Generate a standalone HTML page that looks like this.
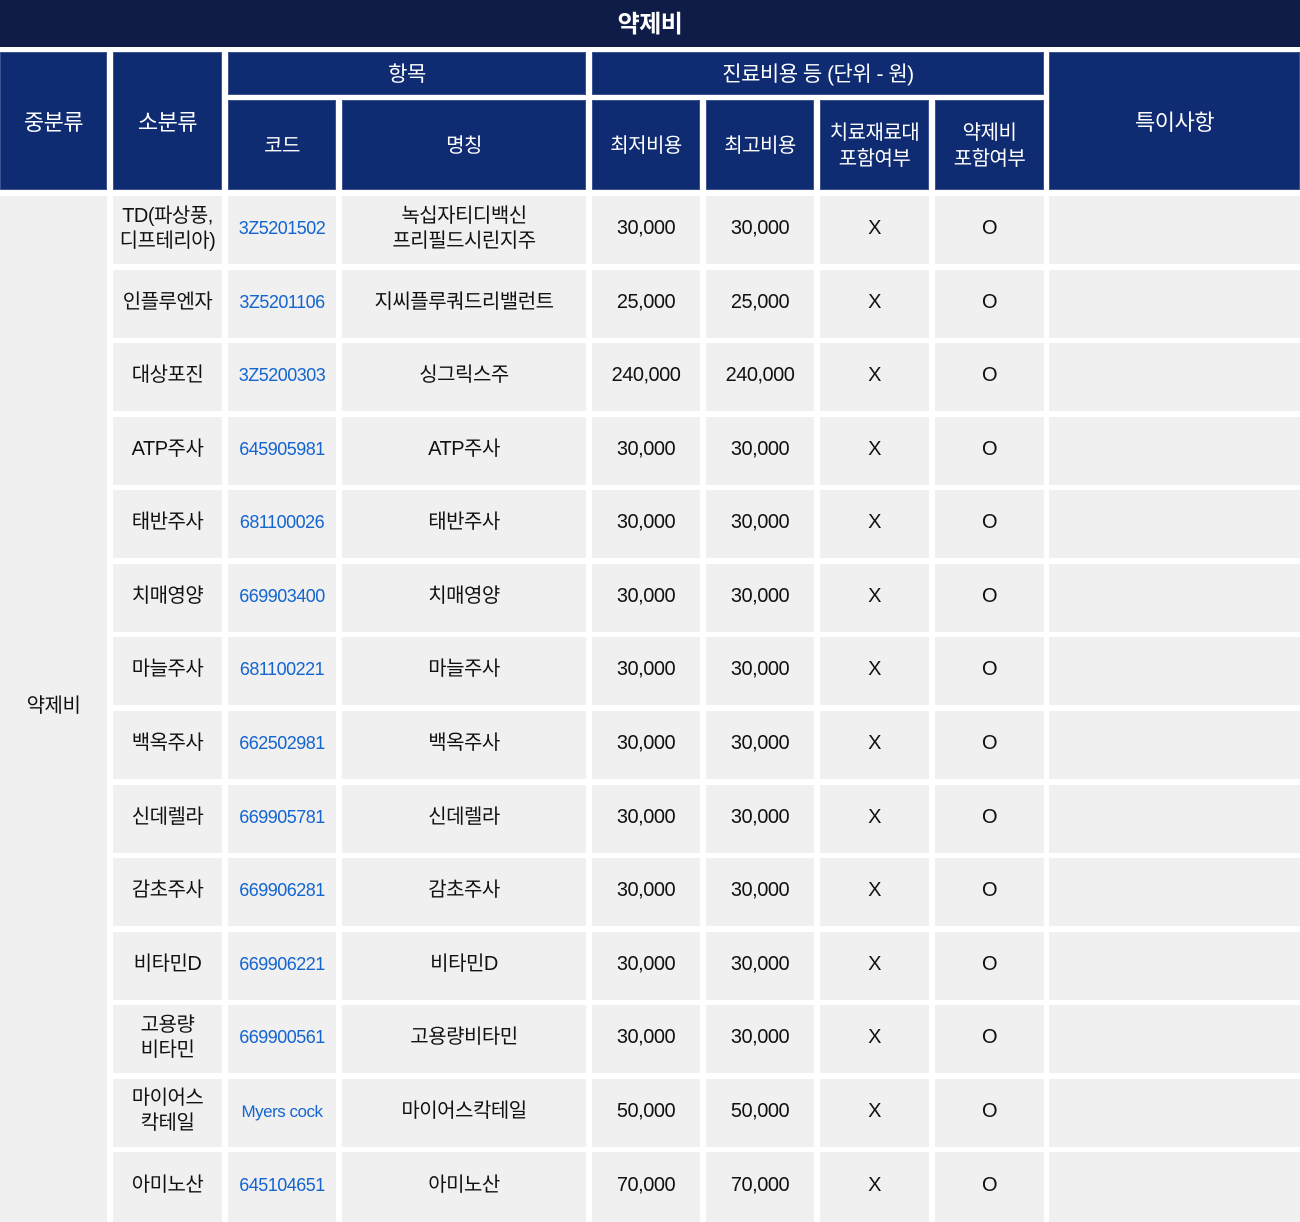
<!DOCTYPE html>
<html><head><meta charset="utf-8"><style>
*{margin:0;padding:0;box-sizing:border-box}
body{width:1300px;height:1222px;background:#fff;position:relative;overflow:hidden;font-family:"Liberation Sans","Noto Sans CJK KR",sans-serif;letter-spacing:-0.5px}
.c{position:absolute;display:flex;align-items:center;justify-content:center;text-align:center;padding-bottom:3px;line-height:25px}
.h{background:#0f2b72;color:#fff;border:1px solid #3d5490;font-size:20px}
.b{background:#f0f0f0;color:#111;font-size:20px;height:68px}
.k{color:#1565d0;font-size:18px}
.c1{left:113px;width:109px}.c2{left:228px;width:108px}.c3{left:342px;width:244px}.c4{left:592px;width:108px}.c5{left:706px;width:108px}.c6{left:820px;width:109px}.c7{left:935px;width:109px}.c8{left:1049px;width:251px}
</style></head><body>
<div class="c" style="left:0;top:0;width:1300px;height:47px;background:#101c48;color:#fff;font-size:24px;font-weight:bold;padding-bottom:0;padding-top:1px">약제비</div>
<div class="c h" style="left:0;top:52px;width:107px;height:138px;font-size:22px;padding-bottom:0;padding-top:2px">중분류</div>
<div class="c h c1" style="top:52px;height:138px;font-size:22px;padding-bottom:0;padding-top:2px">소분류</div>
<div class="c h" style="left:228px;top:52px;width:358px;height:43px;font-size:21px;padding-bottom:0;padding-top:1px">항목</div>
<div class="c h" style="left:592px;top:52px;width:452px;height:43px;font-size:21px;padding-bottom:0;padding-top:1px">진료비용 등 (단위 - 원)</div>
<div class="c h c8" style="top:52px;height:138px;font-size:22px;padding-bottom:0;padding-top:2px">특이사항</div>
<div class="c h c2" style="top:100px;height:90px;padding-bottom:0;padding-top:2px">코드</div>
<div class="c h c3" style="top:100px;height:90px;padding-bottom:0;padding-top:2px">명칭</div>
<div class="c h c4" style="top:100px;height:90px;padding-bottom:0;padding-top:2px">최저비용</div>
<div class="c h c5" style="top:100px;height:90px;padding-bottom:0;padding-top:2px">최고비용</div>
<div class="c h c6" style="top:100px;height:90px;padding-bottom:0;padding-top:2px;line-height:26px">치료재료대<br>포함여부</div>
<div class="c h c7" style="top:100px;height:90px;padding-bottom:0;padding-top:2px;line-height:26px">약제비<br>포함여부</div>
<div class="c b" style="left:0;top:196px;width:107px;height:1026px;padding-bottom:6px">약제비</div>

<div class="c b c1" style="top:196px">TD(파상풍,<br>디프테리아)</div><div class="c b c2 k" style="top:196px">3Z5201502</div><div class="c b c3" style="top:196px">녹십자티디백신<br>프리필드시린지주</div><div class="c b c4" style="top:196px">30,000</div><div class="c b c5" style="top:196px">30,000</div><div class="c b c6" style="top:196px">X</div><div class="c b c7" style="top:196px">O</div><div class="c b c8" style="top:196px"></div>

<div class="c b c1" style="top:269.5px">인플루엔자</div><div class="c b c2 k" style="top:269.5px">3Z5201106</div><div class="c b c3" style="top:269.5px">지씨플루쿼드리밸런트</div><div class="c b c4" style="top:269.5px">25,000</div><div class="c b c5" style="top:269.5px">25,000</div><div class="c b c6" style="top:269.5px">X</div><div class="c b c7" style="top:269.5px">O</div><div class="c b c8" style="top:269.5px"></div>

<div class="c b c1" style="top:343px">대상포진</div><div class="c b c2 k" style="top:343px">3Z5200303</div><div class="c b c3" style="top:343px">싱그릭스주</div><div class="c b c4" style="top:343px">240,000</div><div class="c b c5" style="top:343px">240,000</div><div class="c b c6" style="top:343px">X</div><div class="c b c7" style="top:343px">O</div><div class="c b c8" style="top:343px"></div>

<div class="c b c1" style="top:416.5px">ATP주사</div><div class="c b c2 k" style="top:416.5px">645905981</div><div class="c b c3" style="top:416.5px">ATP주사</div><div class="c b c4" style="top:416.5px">30,000</div><div class="c b c5" style="top:416.5px">30,000</div><div class="c b c6" style="top:416.5px">X</div><div class="c b c7" style="top:416.5px">O</div><div class="c b c8" style="top:416.5px"></div>

<div class="c b c1" style="top:490px">태반주사</div><div class="c b c2 k" style="top:490px">681100026</div><div class="c b c3" style="top:490px">태반주사</div><div class="c b c4" style="top:490px">30,000</div><div class="c b c5" style="top:490px">30,000</div><div class="c b c6" style="top:490px">X</div><div class="c b c7" style="top:490px">O</div><div class="c b c8" style="top:490px"></div>

<div class="c b c1" style="top:563.5px">치매영양</div><div class="c b c2 k" style="top:563.5px">669903400</div><div class="c b c3" style="top:563.5px">치매영양</div><div class="c b c4" style="top:563.5px">30,000</div><div class="c b c5" style="top:563.5px">30,000</div><div class="c b c6" style="top:563.5px">X</div><div class="c b c7" style="top:563.5px">O</div><div class="c b c8" style="top:563.5px"></div>

<div class="c b c1" style="top:637px">마늘주사</div><div class="c b c2 k" style="top:637px">681100221</div><div class="c b c3" style="top:637px">마늘주사</div><div class="c b c4" style="top:637px">30,000</div><div class="c b c5" style="top:637px">30,000</div><div class="c b c6" style="top:637px">X</div><div class="c b c7" style="top:637px">O</div><div class="c b c8" style="top:637px"></div>

<div class="c b c1" style="top:711px">백옥주사</div><div class="c b c2 k" style="top:711px">662502981</div><div class="c b c3" style="top:711px">백옥주사</div><div class="c b c4" style="top:711px">30,000</div><div class="c b c5" style="top:711px">30,000</div><div class="c b c6" style="top:711px">X</div><div class="c b c7" style="top:711px">O</div><div class="c b c8" style="top:711px"></div>

<div class="c b c1" style="top:784.5px">신데렐라</div><div class="c b c2 k" style="top:784.5px">669905781</div><div class="c b c3" style="top:784.5px">신데렐라</div><div class="c b c4" style="top:784.5px">30,000</div><div class="c b c5" style="top:784.5px">30,000</div><div class="c b c6" style="top:784.5px">X</div><div class="c b c7" style="top:784.5px">O</div><div class="c b c8" style="top:784.5px"></div>

<div class="c b c1" style="top:858px">감초주사</div><div class="c b c2 k" style="top:858px">669906281</div><div class="c b c3" style="top:858px">감초주사</div><div class="c b c4" style="top:858px">30,000</div><div class="c b c5" style="top:858px">30,000</div><div class="c b c6" style="top:858px">X</div><div class="c b c7" style="top:858px">O</div><div class="c b c8" style="top:858px"></div>

<div class="c b c1" style="top:931.5px">비타민D</div><div class="c b c2 k" style="top:931.5px">669906221</div><div class="c b c3" style="top:931.5px">비타민D</div><div class="c b c4" style="top:931.5px">30,000</div><div class="c b c5" style="top:931.5px">30,000</div><div class="c b c6" style="top:931.5px">X</div><div class="c b c7" style="top:931.5px">O</div><div class="c b c8" style="top:931.5px"></div>

<div class="c b c1" style="top:1005px">고용량<br>비타민</div><div class="c b c2 k" style="top:1005px">669900561</div><div class="c b c3" style="top:1005px">고용량비타민</div><div class="c b c4" style="top:1005px">30,000</div><div class="c b c5" style="top:1005px">30,000</div><div class="c b c6" style="top:1005px">X</div><div class="c b c7" style="top:1005px">O</div><div class="c b c8" style="top:1005px"></div>

<div class="c b c1" style="top:1078.5px">마이어스<br>칵테일</div><div class="c b c2 k" style="top:1078.5px;font-size:17px">Myers cock</div><div class="c b c3" style="top:1078.5px">마이어스칵테일</div><div class="c b c4" style="top:1078.5px">50,000</div><div class="c b c5" style="top:1078.5px">50,000</div><div class="c b c6" style="top:1078.5px">X</div><div class="c b c7" style="top:1078.5px">O</div><div class="c b c8" style="top:1078.5px"></div>

<div class="c b c1" style="top:1152px;height:70px">아미노산</div><div class="c b c2 k" style="top:1152px;height:70px">645104651</div><div class="c b c3" style="top:1152px;height:70px">아미노산</div><div class="c b c4" style="top:1152px;height:70px">70,000</div><div class="c b c5" style="top:1152px;height:70px">70,000</div><div class="c b c6" style="top:1152px;height:70px">X</div><div class="c b c7" style="top:1152px;height:70px">O</div><div class="c b c8" style="top:1152px;height:70px"></div>
</body></html>
